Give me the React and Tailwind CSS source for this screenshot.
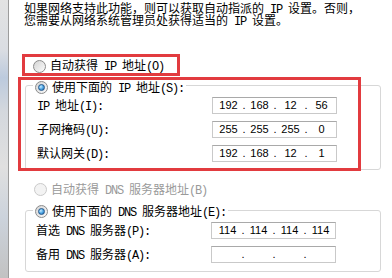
import React, { Fragment } from 'react';

// 中英文混排：ASCII 部分用等宽字体模拟宋体半角
const Mixed = ({ text }) => {
  const parts = text.split(/([\x00-\xff]+)/).filter(Boolean);
  return (
    <span className="whitespace-pre">
      {parts.map((p, i) =>
        /^[\x00-\xff]+$/.test(p) ? (
          <span key={i} className="font-['Liberation_Mono',monospace] tracking-[-1.2px]">
            {p}
          </span>
        ) : (
          <span key={i}>{p}</span>
        )
      )}
    </span>
  );
};

const Radio = ({ checked = false, disabled = false }) => {
  if (disabled) {
    return <div className="w-[13px] h-[13px] shrink-0 rounded-full border border-[#cacaca] bg-[#f3f3f3]" />;
  }
  return (
    <div className="w-[13px] h-[13px] shrink-0 rounded-full border border-[#8b8b8b] bg-[linear-gradient(135deg,#d4d4d4,#fbfbfb)] flex items-center justify-center">
      {checked && (
        <div className="w-[7px] h-[7px] rounded-full border border-[#24578c] bg-[radial-gradient(circle_at_35%_35%,#c9ecff_0%,#4fa8e6_50%,#1d5d9e_100%)]" />
      )}
    </div>
  );
};

const IpBox = ({ parts = ['', '', '', ''] }) => (
  <div className="w-[125px] h-[17px] shrink-0 border border-[#c9c9c9] border-t-[#a9a9a9] bg-white flex items-center pl-[3px] font-['Liberation_Sans',sans-serif] text-[11px] leading-none text-black">
    {parts.map((p, i) => (
      <Fragment key={i}>
        <span className="w-[25px] text-center">{p}</span>
        {i < 3 && <span className="w-[6px] text-center">.</span>}
      </Fragment>
    ))}
  </div>
);

const Row = ({ label, parts }) => (
  <div className="flex items-center h-[17px]">
    <div className="w-[175px] h-[12px] flex items-center whitespace-nowrap">
      <Mixed text={label} />
    </div>
    <IpBox parts={parts} />
  </div>
);

export default function App() {
  return (
    <div className="relative w-[392px] h-[278px] overflow-hidden bg-white flex font-['Noto_Sans_CJK_SC',sans-serif] text-[12px] leading-[12px] text-black">
      {/* 左侧窗口边缘 */}
      <div className="w-[9px] shrink-0 bg-[linear-gradient(to_bottom,#e3e3e3_0%,#dadde2_18%,#bccadd_28%,#d4d8dd_40%,#e0e0e0_60%,#ccd3dc_78%,#c2c2c2_100%)] border-r border-[#9c9c9c]" />

      <div className="flex-1 flex flex-col">
        {/* 说明文字 */}
        <div className="pt-[3px] pl-[15px] whitespace-nowrap">
          <div className="h-[12px] flex items-center"><Mixed text="如果网络支持此功能，则可以获取自动指派的 IP 设置。否则，" /></div>
          <div className="h-[12px] flex items-center"><Mixed text="您需要从网络系统管理员处获得适当的 IP 设置。" /></div>
        </div>

        {/* 自动获得 IP */}
        <div className="mt-[32px] ml-[24px] h-[14px] flex items-center gap-[4px] whitespace-nowrap">
          <Radio />
          <Mixed text="自动获得 IP 地址(O)" />
        </div>

        {/* 使用下面的 IP 地址 */}
        <div className="mt-[12px] ml-[16px] w-[356px] border border-[#d7d7d7] rounded-[3px] pb-[7px]">
          <div className="-mt-[5px] ml-[7px] w-fit h-[13px] flex items-center gap-[4px] bg-white px-[2px] whitespace-nowrap">
            <Radio checked />
            <Mixed text="使用下面的 IP 地址(S):" />
          </div>
          <div className="mt-[3px] pl-[11px] flex flex-col gap-[7px]">
            <Row label="IP 地址(I):" parts={['192', '168', '12', '56']} />
            <Row label="子网掩码(U):" parts={['255', '255', '255', '0']} />
            <Row label="默认网关(D):" parts={['192', '168', '12', '1']} />
          </div>
        </div>

        {/* 自动获得 DNS（禁用） */}
        <div className="mt-[13px] ml-[25px] h-[13px] flex items-center gap-[4px] whitespace-nowrap text-[#9a9a9a]">
          <Radio disabled />
          <Mixed text="自动获得 DNS 服务器地址(B)" />
        </div>

        {/* 使用下面的 DNS */}
        <div className="mt-[14px] ml-[16px] w-[356px] border border-[#d7d7d7] rounded-[3px] pb-[8px]">
          <div className="-mt-[6px] ml-[7px] w-fit h-[13px] flex items-center gap-[4px] bg-white px-[2px] whitespace-nowrap">
            <Radio checked />
            <Mixed text="使用下面的 DNS 服务器地址(E):" />
          </div>
          <div className="mt-[4px] pl-[10px] flex flex-col gap-[7px]">
            <Row label="首选 DNS 服务器(P):" parts={['114', '114', '114', '114']} />
            <Row label="备用 DNS 服务器(A):" parts={['', '', '', '']} />
          </div>
        </div>
      </div>

      {/* 红色标注框 */}
      <div className="absolute left-[22px] top-[54px] w-[158px] h-[22px] border-[3px] border-[#e23b3f] pointer-events-none" />
      <div className="absolute left-[18px] top-[77px] w-[343px] h-[94px] border-[3px] border-[#e23b3f] pointer-events-none" />
    </div>
  );
}
